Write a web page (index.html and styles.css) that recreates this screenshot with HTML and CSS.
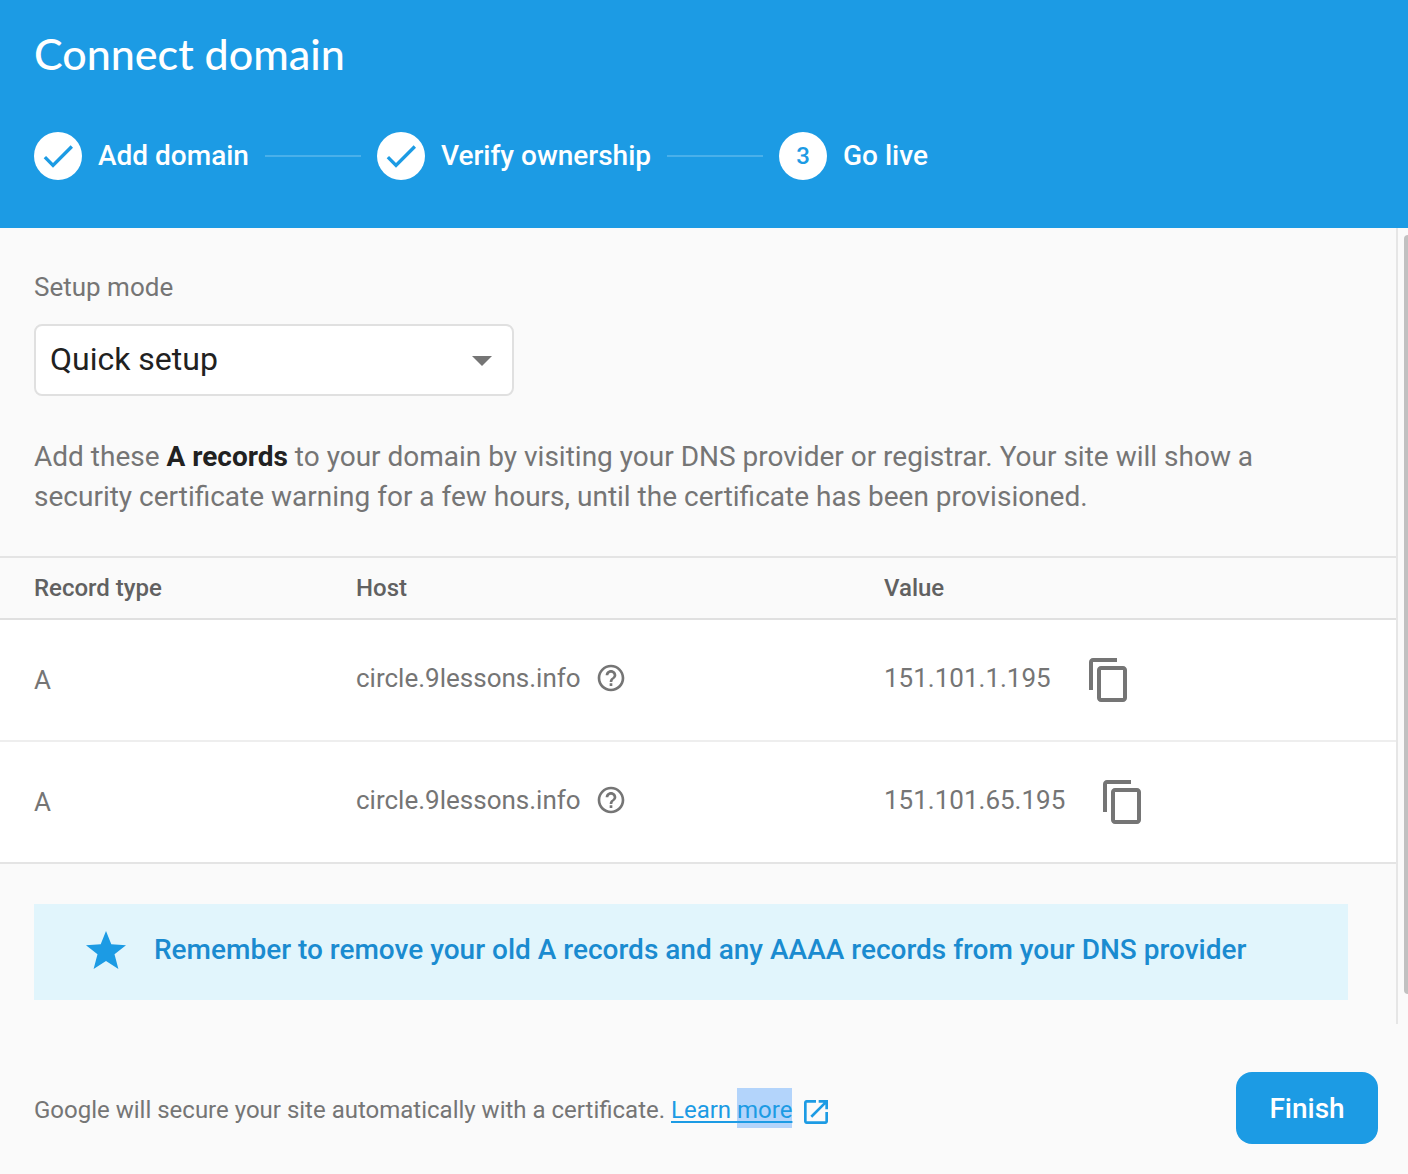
FILE: index.html
```html
<!DOCTYPE html>
<html lang="en">
<head>
<meta charset="utf-8">
<meta name="viewport" content="width=device-width, initial-scale=1">
<title>Connect domain</title>
<link rel="stylesheet" href="styles.css">
</head>
<body>
<svg class="sprite" aria-hidden="true">
  <symbol id="check" viewBox="0 0 24 24"><path d="M9 16.17 4.83 12l-1.42 1.41L9 19 21 7l-1.41-1.41z"/></symbol>
  <symbol id="help" viewBox="0 0 24 24"><path d="M11 18h2v-2h-2v2zm1-16C6.48 2 2 6.48 2 12s4.48 10 10 10 10-4.48 10-10S17.52 2 12 2zm0 18c-4.41 0-8-3.590-8-8s3.590-8 8-8 8 3.590 8 8-3.590 8-8 8zm0-14c-2.210 0-4 1.790-4 4h2c0-1.100.9-2 2-2s2 .9 2 2c0 2-3 1.750-3 5h2c0-2.250 3-2.500 3-5 0-2.210-1.790-4-4-4z"/></symbol>
  <symbol id="copy" viewBox="0 0 24 24"><path d="M16 1H4c-1.100 0-2 .9-2 2v14h2V3h12V1zm3 4H8c-1.100 0-2 .9-2 2v14c0 1.100.9 2 2 2h11c1.100 0 2-.9 2-2V7c0-1.100-.9-2-2-2zm0 16H8V7h11v14z"/></symbol>
  <symbol id="star" viewBox="0 0 40 38"><path d="M20 0l5.300 13.300L40 14.300 28.500 23.300 32.400 38 20 30 7.600 38l3.900-14.700L0 14.300l14.700-1z"/></symbol>
  <symbol id="open" viewBox="3 3 18 18"><path d="M19 19H5V5h7V3H5c-1.110 0-2 .9-2 2v14c0 1.100.89 2 2 2h14c1.100 0 2-.9 2-2v-7h-2v7zM14 3v2h3.590l-9.830 9.830 1.410 1.410L19 6.410V10h2V3h-7z"/></symbol>
</svg>
<div class="dialog">
  <header class="header">
    <h1 class="title">Connect domain</h1>
    <ol class="steps">
      <li class="step"><span class="badge"><svg class="check"><use href="#check"/></svg></span>Add domain</li>
      <li class="step"><span class="badge"><svg class="check"><use href="#check"/></svg></span>Verify ownership</li>
      <li class="step" aria-current="step"><span class="badge">3</span>Go live</li>
    </ol>
  </header>
  <main class="body">
    <div class="content">
      <section class="setup">
        <label class="label" for="mode">Setup mode</label>
        <div class="select-box">
          <select class="select" id="mode"><option>Quick setup</option><option>Advanced setup</option></select>
          <svg class="arrow" viewBox="0 0 20 10" aria-hidden="true"><path d="M0 0h20L10 10z"/></svg>
        </div>
        <p class="intro">Add these <strong>A records</strong> to your domain by visiting your DNS provider or registrar. Your site will show a security certificate warning for a few hours, until the certificate has been provisioned.</p>
      </section>
      <table class="records">
        <thead>
          <tr><th class="col-type" scope="col">Record type</th><th class="col-host" scope="col">Host</th><th scope="col">Value</th></tr>
        </thead>
        <tbody>
          <tr>
            <td>A</td>
            <td><div class="cell host">circle.9lessons.info<button class="icon-button" type="button" aria-label="Help"><svg class="help"><use href="#help"/></svg></button></div></td>
            <td><div class="cell value">151.101.1.195<button class="icon-button" type="button" aria-label="Copy"><svg class="copy"><use href="#copy"/></svg></button></div></td>
          </tr>
          <tr>
            <td>A</td>
            <td><div class="cell host">circle.9lessons.info<button class="icon-button" type="button" aria-label="Help"><svg class="help"><use href="#help"/></svg></button></div></td>
            <td><div class="cell value">151.101.65.195<button class="icon-button" type="button" aria-label="Copy"><svg class="copy"><use href="#copy"/></svg></button></div></td>
          </tr>
        </tbody>
      </table>
      <p class="notice"><svg class="star" aria-hidden="true"><use href="#star"/></svg>Remember to remove your old A records and any AAAA records from your DNS provider</p>
    </div>
    <div class="track" aria-hidden="true"><div class="thumb"></div></div>
  </main>
  <footer class="footer">
    <p class="secure">Google will secure your site automatically with a certificate. <a class="link" href="#learn">Learn <span class="selected">more</span></a><svg class="open" aria-hidden="true"><use href="#open"/></svg></p>
    <button class="finish" type="button">Finish</button>
  </footer>
</div>
</body>
</html>
```
FILE: styles.css
```css
* {
  box-sizing: border-box;
}

body {
  margin: 0;
  background: #fafafa;
  color: #757575;
  font-family: Roboto, "Liberation Sans", sans-serif;
  font-size: 26px;
  line-height: 40px;
}

svg {
  display: block;
  flex: none;
  fill: currentColor;
}

.sprite {
  position: absolute;
  width: 0;
  height: 0;
}

.dialog {
  display: flex;
  flex-direction: column;
  min-height: 100vh;
}

.header {
  padding: 30px 34px 48px;
  background: #1c9be4;
  color: #fff;
}

.title {
  margin: 0 0 54px;
  font-family: Lato, sans-serif;
  font-size: 43px;
  font-weight: 500;
  line-height: 48px;
}

.steps {
  display: flex;
  margin: 0;
  padding: 0;
  list-style: none;
  font-size: 28px;
  font-weight: 500;
  line-height: 48px;
}

.step {
  display: flex;
  align-items: center;
  gap: 16px;
}

.step:not(:last-child)::after {
  content: "";
  width: 96px;
  height: 2px;
  margin-right: 16px;
  background: #49b0ea;
}

.badge {
  display: flex;
  align-items: center;
  justify-content: center;
  width: 48px;
  height: 48px;
  border-radius: 50%;
  background: #fff;
  color: #1c9be4;
  font-size: 24px;
}

.check {
  width: 40px;
  height: 40px;
}

.body {
  display: flex;
}

.content {
  flex: 1;
  min-width: 0;
}

.setup {
  padding: 39px 48px 39px 34px;
}

.label {
  display: block;
  margin-bottom: 17px;
}

.select-box {
  display: grid;
  align-items: center;
  max-width: 480px;
}

.select {
  grid-area: 1 / 1;
  width: 100%;
  height: 72px;
  padding: 0 14px 2px;
  border: 2px solid #e0e0e0;
  border-radius: 8px;
  appearance: none;
  background: #fff;
  color: #212121;
  font-family: inherit;
  font-size: 32px;
}

.arrow {
  grid-area: 1 / 1;
  justify-self: end;
  width: 20px;
  height: 10px;
  margin: 2px 22px 0 0;
  pointer-events: none;
}

.intro {
  margin: 41px 0 0;
  font-size: 28px;
}

.intro strong {
  color: #212121;
}

.records {
  width: 100%;
  border-collapse: separate;
  border-spacing: 0;
  table-layout: fixed;
  border-top: 2px solid #e4e4e4;
  text-align: left;
}

.records th {
  height: 62px;
  padding: 0;
  border-bottom: 2px solid #e0e0e0;
  color: #616161;
  font-size: 24px;
  font-weight: 500;
}

.records td {
  height: 122px;
  padding: 0;
  border-bottom: 2px solid #eee;
  background: #fff;
}

.records tr:last-child td {
  border-bottom-color: #e4e4e4;
}

.records th:first-child,
.records td:first-child {
  padding-left: 34px;
}

.col-type {
  width: 356px;
}

.col-host {
  width: 528px;
}

.cell {
  display: flex;
  align-items: center;
  padding-bottom: 4px;
}

.host {
  gap: 14px;
}

.value {
  gap: 34px;
}

.icon-button {
  padding: 0;
  border: 0;
  background: none;
  color: inherit;
}

.help {
  width: 32px;
  height: 32px;
}

.copy {
  width: 48px;
  height: 48px;
  margin-top: 4px;
}

.notice {
  display: flex;
  align-items: center;
  gap: 28px;
  min-height: 96px;
  margin: 40px 48px 24px 34px;
  padding: 0 52px 4px;
  background: #e1f5fc;
  color: #1a8bd0;
  font-size: 28px;
  font-weight: 500;
}

.star {
  width: 40px;
  height: 38px;
  color: #1c9be4;
}

.track {
  display: flex;
  width: 12px;
  padding: 7px 0 30px 6px;
  overflow: hidden;
  border-left: 2px solid #e6e6e6;
}

.thumb {
  flex: 1;
  border-radius: 8px 0 0 8px;
  background: #c1c1c1;
}

.footer {
  display: flex;
  align-items: center;
  justify-content: space-between;
  gap: 24px;
  padding: 48px 30px 30px 34px;
}

.secure {
  margin: 0;
  font-size: 24px;
  line-height: 36px;
}

.link {
  color: #1c9be4;
  text-decoration-thickness: 2px;
  text-underline-offset: 3px;
}

.selected {
  display: inline-block;
  padding-top: 4px;
  background: #b3d4fb;
  text-decoration: underline;
  text-decoration-thickness: 2px;
}

.open {
  display: inline-block;
  width: 24px;
  height: 24px;
  margin-left: 12px;
  color: #1c9be4;
  vertical-align: -6px;
}

.finish {
  min-width: 142px;
  height: 72px;
  padding: 0 32px;
  border: 0;
  border-radius: 16px;
  background: #1c9be4;
  color: #fff;
  font-family: inherit;
  font-size: 28px;
  font-weight: 500;
}
```
